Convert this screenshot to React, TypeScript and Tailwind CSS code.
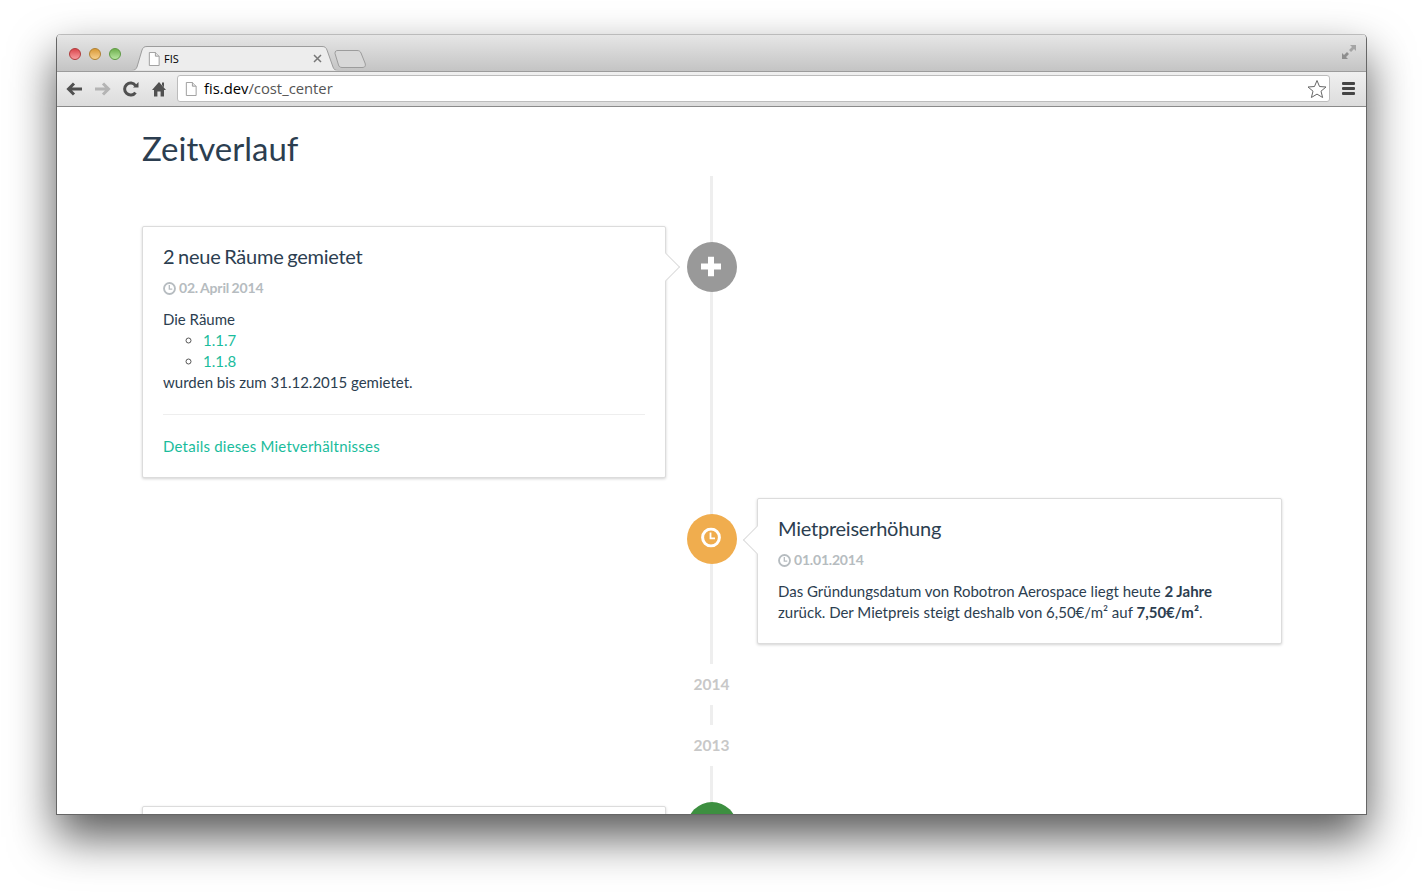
import type { ReactNode } from "react";

const ClockIcon = ({ className }: { className: string }) => (
  <svg viewBox="0 0 14 14" className={className} fill="none" stroke="currentColor">
    <circle cx="7" cy="7" r="5.900" strokeWidth="2" />
    <path d="M6.800 3.200V7.600H10" strokeWidth="1.400" />
  </svg>
);

const PageIcon = ({ className }: { className: string }) => (
  <svg viewBox="0 0 12 15" className={className}>
    <path d="M1 .5H7.5L11.5 4.5V14.5H1Z" fill="#fff" stroke="#9a9a9a" />
    <path d="M7.5 .5V4.5H11.5" fill="#e4e4e4" stroke="#9a9a9a" />
  </svg>
);

function Card({ title, date, side, children }: { title: string; date: string; side: "left" | "right"; children: ReactNode }) {
  return (
    <div className="relative w-full rounded-[2px] border border-[#dcdcdc] bg-white px-5 pt-[16px] pb-5 shadow-[0_1px_3px_rgba(0,0,0,0.18)]">
      {side === "left" ? (
        <div className="absolute top-[30px] right-[-11px] h-5 w-5 rotate-45 border-t border-r border-[#dcdcdc] bg-white" />
      ) : (
        <div className="absolute top-[31px] left-[-11px] h-5 w-5 rotate-45 border-b border-l border-[#dcdcdc] bg-white" />
      )}
      <h3 className="relative text-[20px] leading-[26px] tracking-[-0.24px] text-[#2c3e50] [word-spacing:-1.200px]">{title}</h3>
      <div className="relative mt-[9px] flex items-center gap-[3px] text-[14px] leading-[20px] font-bold tracking-[-0.2px] text-[#b6bcc0] [word-spacing:-0.6px]">
        <ClockIcon className="h-[13px] w-[13px]" />
        {date}
      </div>
      <div className="relative mt-[11px] text-[15px] leading-[21px] text-[#2c3e50]">{children}</div>
    </div>
  );
}

function Badge({ color, children }: { color: string; children?: ReactNode }) {
  return (
    <div className={`z-10 flex h-[50px] w-[50px] shrink-0 items-center justify-center rounded-full ${color}`}>
      {children}
    </div>
  );
}

function Year({ label }: { label: string }) {
  return (
    <div className="relative flex h-[41px] items-center justify-center bg-white text-[15.500px] font-bold text-[#c8c8c8]">
      {label}
    </div>
  );
}

export default function App() {
  return (
    <div className="h-[893px] w-[1423px] overflow-hidden bg-white pt-[34px] pl-[56px] font-['Lato',sans-serif]">
      <div className="flex h-[781px] w-[1311px] flex-col overflow-hidden rounded-t-[5px] border-x border-b border-[#666] bg-white shadow-[0_22px_46px_rgba(0,0,0,0.66)]">
        {/* title bar */}
        <div className="relative flex h-[37px] shrink-0 items-start border-t border-[#bbb] bg-gradient-to-b from-[#e6e6e6] to-[#c4c4c4] pl-[12px]">
          <div className="mt-[13px] flex gap-2">
            <span className="h-3 w-3 rounded-full border border-[#b03a3a] bg-gradient-to-b from-[#d9434c] to-[#f89ba0]" />
            <span className="h-3 w-3 rounded-full border border-[#b08030] bg-gradient-to-b from-[#d99a34] to-[#f7d08c]" />
            <span className="h-3 w-3 rounded-full border border-[#5d9a42] bg-gradient-to-b from-[#6fb04e] to-[#b8e6a0]" />
          </div>
          <svg viewBox="0 0 240 25" className="absolute bottom-0 left-[75px] h-[25px] w-[240px]">
            <path d="M0 24.500C3 24.500 4 23 5 21L10 4C11 1.500 12 .5 15 .5H190C193 .5 194 1.500 195 4L201 21C202 23.500 203 24.500 206 24.500" fill="#ededed" stroke="#9c9c9c" />
            <path d="M0 25H206V24.500H0Z" fill="#ededed" />
            <path d="M203 7.500C203 5 204 4.500 206 4.500H225C227 4.500 228 5 229 7L233 17C234 20 233 21.500 230 21.500H210C208 21.500 207 20.500 206.500 19Z" fill="#d8d8d8" stroke="#9c9c9c" />
          </svg>
          <PageIcon className="absolute top-[17px] left-[91px] h-[14px] w-[12px]" />
          <span className="absolute top-[16px] left-[107px] font-['Open_Sans',sans-serif] text-[11px] leading-[16px] text-black">FIS</span>
          <svg viewBox="0 0 9 9" className="absolute top-[19px] left-[256px] h-[9px] w-[9px]" stroke="#777" strokeWidth="1.500">
            <path d="M1 1L8 8M8 1L1 8" />
          </svg>
          <svg viewBox="0 0 16 16" className="absolute top-[9px] right-[9px] h-[16px] w-[16px]" fill="#8e8e8e">
            <path d="M9 1H15V7L13 5L10 8L8 6L11 3Z" fill="#a4a4a4" />
            <path d="M1 15V9L3 11L6 8L8 10L5 13L7 15Z" />
          </svg>
        </div>
        {/* toolbar */}
        <div className="flex h-[36px] shrink-0 items-center border-t border-b border-t-[#9c9c9c] border-b-[#8a8a8a] bg-gradient-to-b from-[#f0f0f0] to-[#dcdcdc] pb-[1px] pl-[9px]">
          <svg viewBox="0 0 16 14" className="h-[14px] w-[16px]" fill="none" stroke="#505050" strokeWidth="3">
            <path d="M8 1.500L2.500 7L8 12.500M3 7H16" />
          </svg>
          <svg viewBox="0 0 16 14" className="ml-[13px] h-[14px] w-[16px]" fill="none" stroke="#b4b4b4" strokeWidth="3">
            <path d="M8 1.500L13.500 7L8 12.500M13 7H0" />
          </svg>
          <svg viewBox="0 0 16 16" className="ml-[12px] h-[16px] w-[16px]" fill="none" stroke="#505050" strokeWidth="3">
            <path d="M12.500 11.500A6 6 0 1 1 12.500 4.500" />
            <path d="M10 6.500H15.500V1Z" fill="#505050" stroke="none" />
          </svg>
          <svg viewBox="0 0 16 16" className="ml-[12px] h-[16px] w-[16px]" fill="#505050">
            <path d="M8 1L15 9H13V15.500H9.600V10.500H6.400V15.500H3V9H1Z" />
            <path d="M11 1.500H13V6.500L11 4Z" />
          </svg>
          <div className="ml-[10px] flex h-[27px] w-[1153px] items-center rounded-[3px] border border-[#bcbcbc] bg-white pl-[7px]">
            <PageIcon className="h-[14px] w-[12px]" />
            <span className="ml-[7px] font-['Open_Sans',sans-serif] text-[14.800px] text-black">
              fis.dev<span className="text-[#555]">/cost_center</span>
            </span>
            <svg viewBox="0 0 20 20" className="mr-[2px] ml-auto h-[20px] w-[20px]" fill="#fff" stroke="#666">
              <path d="M10 1.500L12.500 7.500L19 8L14 12.200L15.600 18.500L10 15.100L4.400 18.500L6 12.200L1 8L7.500 7.500Z" />
            </svg>
          </div>
          <div className="ml-[12px] flex w-[13px] flex-col gap-[2px]">
            <span className="h-[3px] rounded-[1px] bg-[#444]" />
            <span className="h-[3px] rounded-[1px] bg-[#444]" />
            <span className="h-[3px] rounded-[1px] bg-[#444]" />
          </div>
        </div>
        {/* page */}
        <div className="flex-1 overflow-hidden px-[85px]">
          <h1 className="mt-[19px] text-[33px] leading-[44px] text-[#2c3e50]">Zeitverlauf</h1>
          <div className="relative mt-[6px] pt-[50px]">
            <div className="absolute top-0 bottom-0 left-[568px] w-[3px] bg-[#eeeeee]" />
            <div className="relative flex items-start">
              <div className="w-[524px]">
                <Card title="2 neue Räume gemietet" date="02. April 2014" side="left">
                  <p>Die Räume</p>
                  <ul className="list-[circle] pl-10 marker:text-[#555]">
                    <li className="text-[#1abc9c]">1.1.7</li>
                    <li className="text-[#1abc9c]">1.1.8</li>
                  </ul>
                  <p>wurden bis zum 31.12.2015 gemietet.</p>
                  <hr className="mt-[21px] border-[#eeeeee]" />
                  <a className="mt-[21px] block tracking-[0.22px] text-[#1abc9c]">Details dieses Mietverhältnisses</a>
                </Card>
              </div>
              <div className="mt-4 ml-[21px]">
                <Badge color="bg-[#999999]">
                  <svg viewBox="0 0 20 20" className="h-[20px] w-[20px] -translate-x-[1px] -translate-y-[0.5px]" fill="#fff">
                    <path d="M7 0H13V7H20V13H13V20H7V13H0V7H7Z" />
                  </svg>
                </Badge>
              </div>
            </div>
            <div className="relative mt-5 flex items-start">
              <div className="mt-4 ml-[545px]">
                <Badge color="bg-[#f0ad4e]">
                  <svg viewBox="0 0 20 20" className="h-[20px] w-[20px] -translate-x-[1px] -translate-y-[1.500px]" fill="none" stroke="#fff">
                    <circle cx="10" cy="10" r="8.400" strokeWidth="3" />
                    <path d="M9.500 5V10.800H14" strokeWidth="1.800" />
                  </svg>
                </Badge>
              </div>
              <div className="ml-5 w-[525px] shrink-0">
                <Card title="Mietpreiserhöhung" date="01.01.2014" side="right">
                  <p>
                    Das Gründungsdatum von Robotron Aerospace liegt heute <b>2 Jahre</b> zurück. Der Mietpreis steigt deshalb von 6,50€/m² auf <b>7,50€/m²</b>.
                  </p>
                </Card>
              </div>
            </div>
            <div className="relative mt-5 ml-[544px] w-[51px]">
              <Year label="2014" />
            </div>
            <div className="relative mt-5 ml-[544px] w-[51px]">
              <Year label="2013" />
            </div>
            <div className="relative mt-9 flex items-start">
              <div className="mt-1 w-[524px]">
                <div className="h-[60px] rounded-[2px] border border-[#dcdcdc] bg-white shadow-[0_1px_3px_rgba(0,0,0,0.18)]" />
              </div>
              <div className="ml-[21px]">
                <Badge color="bg-[#3d8f40]" />
              </div>
            </div>
          </div>
        </div>
      </div>
    </div>
  );
}
